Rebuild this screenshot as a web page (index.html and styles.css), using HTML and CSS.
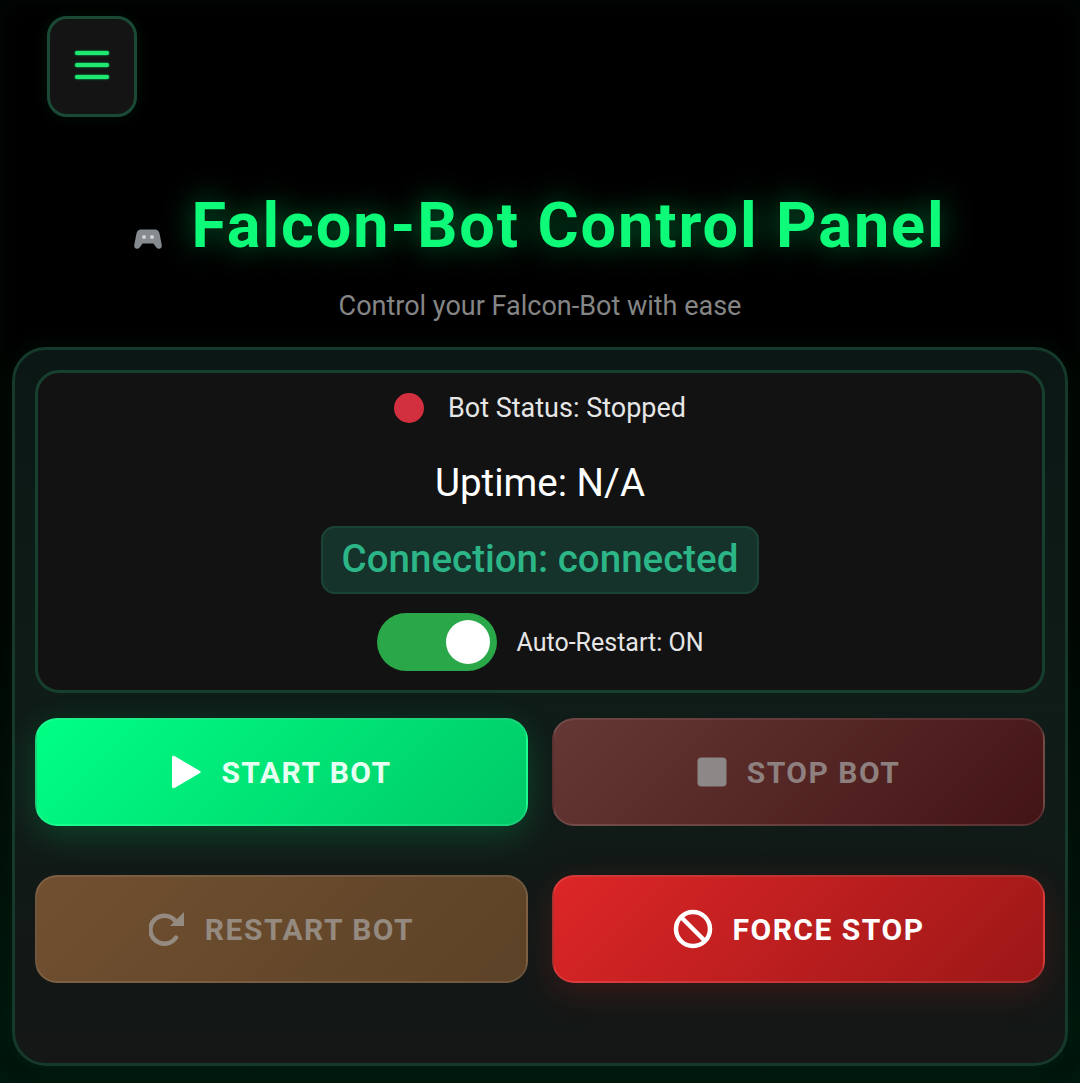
FILE: index.html
```html
<!DOCTYPE html>
<html>
<head>
    <title>Falcon-Bot Control Panel</title>
    <link rel="stylesheet" href="styles.css">
</head>
<body>
    <button class="menu-btn" aria-label="Menu">
        <span class="menu-bar"></span>
        <span class="menu-bar"></span>
        <span class="menu-bar"></span>
    </button>

    <div class="header">
        <h1 class="title">
            <svg class="title-icon" viewBox="0 0 28 22" width="28" height="22">
                <path fill="#868b8f" d="M7 1.500h14c2.400 0 3.800 1.400 4.500 3.800l2.200 11.500c.4 2.500-.8 4-2.500 4-1.400 0-2.400-.8-3.400-2.100l-2.400-3.200H8.600l-2.400 3.200C5.200 20 4.200 20.800 2.800 20.800c-1.700 0-2.900-1.500-2.500-4L2.500 5.300C3.200 2.900 4.600 1.500 7 1.500z"/>
                <circle cx="10" cy="9" r="2" fill="#d0d4d8"/>
                <circle cx="18" cy="9" r="2" fill="#d0d4d8"/>
            </svg>
            <span class="title-text">Falcon-Bot Control Panel</span>
        </h1>
        <p class="subtitle">Control your Falcon-Bot with ease</p>
    </div>

    <div class="panel">
        <div class="status-card">
            <div class="status-row">
                <span class="status-dot"></span>
                <span>Bot Status: Stopped</span>
            </div>
            <div class="uptime">Uptime: N/A</div>
            <div class="connection">Connection: connected</div>
            <div class="restart-row">
                <span class="toggle"><span class="toggle-thumb"></span></span>
                <span>Auto-Restart: ON</span>
            </div>
        </div>

        <div class="actions">
            <button class="action-btn start-btn">
                <svg viewBox="0 0 30 34" width="30" height="34"><path fill="#fff" d="M1 2.500C1 1 2.300.4 3.500 1.100L29 16c1 .6 1 1.500 0 2.100L3.500 33c-1.200.7-2.500.1-2.500-1.400z"/></svg>
                START BOT
            </button>
            <button class="action-btn stop-btn">
                <svg viewBox="0 0 30 30" width="30" height="30"><rect x="0.500" y="0.500" width="29" height="29" rx="4" fill="#fff"/></svg>
                STOP BOT
            </button>
            <button class="action-btn restart-btn">
                <svg viewBox="0 0 36 36" width="36" height="36" fill="none"><path d="M27 26.500A14 14 0 1 1 26 9.500" stroke="#fff" stroke-width="4.500" stroke-linecap="round"/><path fill="#fff" d="M35 1v14H21z"/></svg>
                RESTART BOT
            </button>
            <button class="action-btn force-btn">
                <svg viewBox="0 0 40 40" width="40" height="40" fill="none" stroke="#fff" stroke-width="4.500"><circle cx="20" cy="20" r="17"/><path d="M8 8l24 24"/></svg>
                FORCE STOP
            </button>
        </div>
    </div>
</body>
</html>
```
FILE: styles.css
```css
html {
    height: 100%;
    background-color: #000;
}
body {
    font-family: Roboto, "Liberation Sans", sans-serif;
    margin: 0;
    height: 1083px;
    box-sizing: border-box;
    padding: 16px 12px 18px;
    overflow: hidden;
    color: #fff;
    background: linear-gradient(180deg, #000 0%, #000 55%, #01140c 100%);
    box-shadow: inset 0 0 24px rgba(0, 255, 127, 0.04);
}
.menu-btn {
    display: flex;
    flex-direction: column;
    align-items: center;
    justify-content: center;
    gap: 8px;
    width: 90px;
    height: 101px;
    margin-left: 35px;
    padding: 0 0 3px;
    background-color: #141414;
    border: 3px solid #1a4a35;
    border-radius: 20px;
    box-shadow: 0 0 14px rgba(0, 255, 127, 0.08);
}
.menu-bar {
    display: block;
    width: 34px;
    height: 4px;
    border-radius: 2px;
    background-color: #1ee870;
    box-shadow: 0 0 2px #00ff7f;
}
.header {
    text-align: center;
}
.title {
    display: flex;
    align-items: center;
    justify-content: center;
    gap: 29px;
    height: 74px;
    margin: 72px 0 0;
    font-size: 63px;
    font-weight: 700;
    line-height: 74px;
    letter-spacing: 1.900px;
}
.title-icon {
    flex-shrink: 0;
    margin-top: 25px;
}
.title-text {
    color: #0dfb78;
    text-shadow: 0 0 30px rgba(0, 255, 127, 0.45);
}
.subtitle {
    margin: 26px 0 24px;
    font-size: 27px;
    line-height: 34px;
    color: #858585;
}
.panel {
    box-sizing: border-box;
    height: 719px;
    padding: 20px 20px 0;
    background: linear-gradient(180deg, #0b1714 0%, #0f1c18 50%, #141716 100%);
    border: 3px solid #15392a;
    border-radius: 34px;
    box-shadow: 0 0 26px rgba(0, 255, 127, 0.07);
}
.status-card {
    box-sizing: border-box;
    height: 323px;
    display: flex;
    flex-direction: column;
    align-items: center;
    padding-top: 18px;
    background-color: #121212;
    border: 3px solid #173f2e;
    border-radius: 24px;
}
.status-row {
    display: flex;
    align-items: center;
    gap: 24px;
    height: 34px;
    font-size: 27px;
    color: #e6e6e6;
}
.status-dot {
    width: 30px;
    height: 30px;
    border-radius: 50%;
    background-color: #d2303f;
}
.uptime {
    margin-top: 33px;
    font-size: 38.500px;
    line-height: 50px;
}
.connection {
    box-sizing: border-box;
    height: 68px;
    margin-top: 18px;
    padding: 0 19px;
    font-size: 38.500px;
    font-weight: 500;
    line-height: 62px;
    color: #2cb586;
    background-color: #15322b;
    border: 2px solid #1b4436;
    border-radius: 14px;
}
.restart-row {
    display: flex;
    align-items: center;
    gap: 20px;
    margin-top: 19px;
    font-size: 25px;
    color: #e6e6e6;
}
.toggle {
    display: flex;
    justify-content: flex-end;
    align-items: center;
    box-sizing: border-box;
    width: 120px;
    height: 58px;
    padding-right: 7px;
    background-color: #2aa748;
    border-radius: 29px;
}
.toggle-thumb {
    width: 44px;
    height: 44px;
    border-radius: 50%;
    background-color: #fff;
}
.actions {
    display: grid;
    grid-template-columns: 1fr 1fr;
    gap: 49px 24px;
    margin-top: 25px;
}
.action-btn {
    display: flex;
    align-items: center;
    justify-content: center;
    gap: 20px;
    height: 108px;
    font-family: inherit;
    font-size: 30px;
    font-weight: 700;
    letter-spacing: 1.500px;
    color: #fff;
    border: 2px solid rgba(255, 255, 255, 0.1);
    border-radius: 22px;
}
.start-btn {
    background: linear-gradient(135deg, #00ff84 0%, #00c967 100%);
    box-shadow: 0 10px 34px rgba(0, 255, 127, 0.18);
    color: #e6fff2;
}
.stop-btn {
    background: linear-gradient(135deg, #653835 0%, #431414 100%);
    color: #8f8080;
}
.stop-btn svg rect {
    fill: #8c8888;
}
.restart-btn {
    background: linear-gradient(135deg, #715030 0%, #5c4227 100%);
    color: #948a80;
}
.restart-btn svg path {
    stroke: #948a80;
}
.restart-btn svg path:last-child {
    stroke: none;
    fill: #948a80;
}
.force-btn {
    background: linear-gradient(135deg, #dd2627 0%, #9c1717 100%);
    box-shadow: 0 10px 34px rgba(220, 38, 38, 0.18);
}
```
